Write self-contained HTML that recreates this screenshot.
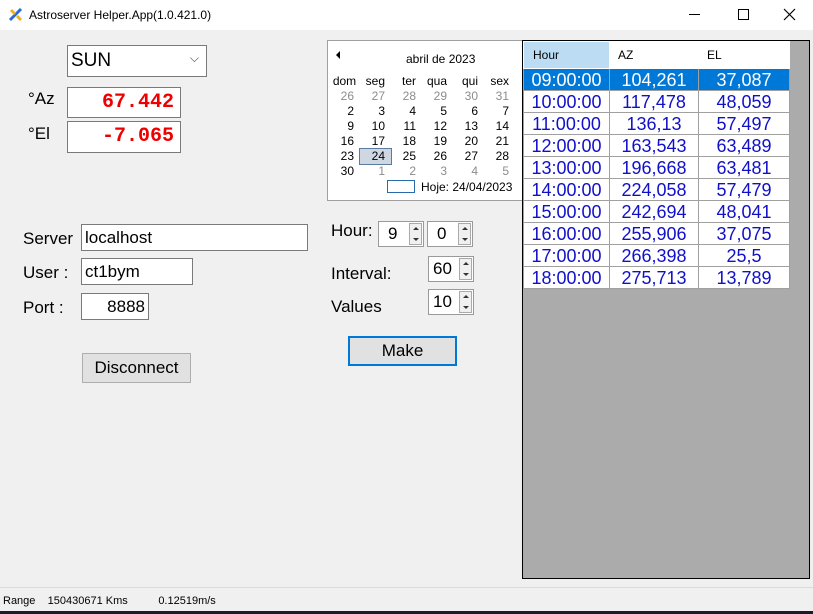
<!DOCTYPE html><html><head><style>
*{margin:0;padding:0;box-sizing:border-box}
body{width:813px;height:614px;background:#f0f0f0;font-family:"Liberation Sans",sans-serif;position:relative;overflow:hidden}
.a{position:absolute}
.tb{background:#fff;height:30px;top:0;left:0;width:813px}
.box{background:#fff;border:1px solid #7a7a7a}
.lbl{font-size:17px;color:#000}
.mono{font-family:"Liberation Mono",monospace;font-weight:bold;color:#e00;font-size:20px;text-align:right;padding-right:6px;line-height:29px}
.cal{font-size:12px;color:#000}
.cal td{width:31px;text-align:right;padding-right:6px;height:15px;line-height:15px}
.g{color:#8c8c8c}
.spin{background:#fff;border:1px solid #9a9a9a;font-size:17px;line-height:24px}
.sb{position:absolute;right:1px;top:1px;width:13px;height:22px;border:1px solid #aaa;background:#f0f0f0}
.sb:before{content:"";position:absolute;left:3px;top:3px;border:3px solid transparent;border-bottom:3px solid #333;border-top:0}
.sb:after{content:"";position:absolute;left:3px;bottom:3px;border:3px solid transparent;border-top:3px solid #333;border-bottom:0}
table.grid{border-collapse:collapse;font-size:18px;color:#1010c8}
table.grid td{height:22px;border:1px solid #a0a0a0;background:#fff;text-align:center;line-height:20px;padding:0}
</style></head><body>
<div class="a tb"></div>
<svg class="a" style="left:8px;top:7px" width="15" height="15"><path d="M2 13L13 2" stroke="#2a6ad8" stroke-width="3"/><path d="M3 3l4 4M9 9l4 4" stroke="#f0b020" stroke-width="3"/></svg>
<div class="a" style="left:29px;top:8px;font-size:12px">Astroserver Helper.App(1.0.421.0)</div>
<div class="a" style="left:689px;top:14px;width:11px;height:1px;background:#000"></div>
<div class="a" style="left:738px;top:9px;width:11px;height:11px;border:1px solid #000"></div>
<svg class="a" style="left:783px;top:8px" width="13" height="13"><path d="M1 1L12 12M12 1L1 12" stroke="#000" stroke-width="1.2"/></svg>

<div class="a box" style="left:67px;top:45px;width:140px;height:32px;font-size:19px;padding:4px 3px">SUN<span style="position:absolute;right:7px;top:5px;font-size:12px;color:#444">⌵</span></div>
<div class="a lbl" style="left:28px;top:89px">°Az</div>
<div class="a box mono" style="left:67px;top:87px;width:114px;height:31px">67.442</div>
<div class="a lbl" style="left:28px;top:124px">°El</div>
<div class="a box mono" style="left:67px;top:121px;width:114px;height:32px">-7.065</div>

<div class="a" style="left:327px;top:40px;width:196px;height:161px;background:#fff;border:1px solid #a0a0a0"></div>
<div class="a" style="left:336px;top:51px;border:4px solid transparent;border-right:4px solid #000;border-left:0"></div>
<div class="a cal" style="left:406px;top:52px">abril de 2023</div>
<table class="a cal" style="left:329px;top:74px;border-collapse:collapse">
<tr><td style="text-align:center;padding:0">dom</td><td>seg</td><td>ter</td><td>qua</td><td>qui</td><td>sex</td></tr>
<tr class="g"><td>26</td><td>27</td><td>28</td><td>29</td><td>30</td><td>31</td></tr>
<tr><td>2</td><td>3</td><td>4</td><td>5</td><td>6</td><td>7</td></tr>
<tr><td>9</td><td>10</td><td>11</td><td>12</td><td>13</td><td>14</td></tr>
<tr><td>16</td><td>17</td><td>18</td><td>19</td><td>20</td><td>21</td></tr>
<tr><td>23</td><td style="background:#cfd8e2;outline:1px solid #5a7aa0">24</td><td>25</td><td>26</td><td>27</td><td>28</td></tr>
<tr class="g"><td style="color:#000">30</td><td>1</td><td>2</td><td>3</td><td>4</td><td>5</td></tr>
</table>
<div class="a" style="left:387px;top:180px;width:28px;height:13px;border:1px solid #2a6aa8"></div>
<div class="a cal" style="left:421px;top:180px">Hoje: 24/04/2023</div>

<div class="a lbl" style="left:23px;top:229px">Server</div>
<div class="a box" style="left:81px;top:224px;width:227px;height:27px;font-size:17px;padding:3px 3px">localhost</div>
<div class="a lbl" style="left:23px;top:263px">User :</div>
<div class="a box" style="left:81px;top:258px;width:112px;height:27px;font-size:17px;padding:3px 3px">ct1bym</div>
<div class="a lbl" style="left:23px;top:298px">Port :</div>
<div class="a box" style="left:81px;top:293px;width:68px;height:27px;font-size:17px;padding:3px 3px;text-align:right">8888</div>
<div class="a" style="left:82px;top:353px;width:109px;height:30px;border:1px solid #adadad;background:#e1e1e1;font-size:17px;text-align:center;line-height:28px">Disconnect</div>

<div class="a lbl" style="left:331px;top:221px">Hour:</div>
<div class="a spin" style="left:378px;top:221px;width:46px;height:26px;padding-left:9px">9<div class="sb"></div></div>
<div class="a spin" style="left:427px;top:221px;width:46px;height:26px;padding-left:9px">0<div class="sb"></div></div>
<div class="a lbl" style="left:331px;top:264px">Interval:</div>
<div class="a spin" style="left:428px;top:256px;width:46px;height:26px;padding-left:4px">60<div class="sb"></div></div>
<div class="a lbl" style="left:331px;top:297px">Values</div>
<div class="a spin" style="left:428px;top:289px;width:46px;height:26px;padding-left:4px">10<div class="sb"></div></div>
<div class="a" style="left:348px;top:336px;width:109px;height:30px;border:2px solid #0078d7;background:#e1e1e1;font-size:17px;text-align:center;line-height:26px">Make</div>

<div class="a" style="left:522px;top:40px;width:288px;height:539px;background:#ababab;border:1px solid #000"></div>
<table class="a grid" style="left:523px;top:41px">
<tr style="font-size:12px;color:#000"><td style="width:86px;height:27px;background:#bcdcf4;text-align:left;padding-left:9px;border-color:#fff">Hour</td><td style="width:89px;text-align:left;padding-left:8px;border-color:#fff">AZ</td><td style="width:91px;text-align:left;padding-left:8px;border-color:#fff">EL</td></tr>
<tr style="color:#fff"><td style="background:#0078d7">09:00:00</td><td style="background:#0078d7">104,261</td><td style="background:#0078d7">37,087</td></tr>
<tr><td>10:00:00</td><td>117,478</td><td>48,059</td></tr>
<tr><td>11:00:00</td><td>136,13</td><td>57,497</td></tr>
<tr><td>12:00:00</td><td>163,543</td><td>63,489</td></tr>
<tr><td>13:00:00</td><td>196,668</td><td>63,481</td></tr>
<tr><td>14:00:00</td><td>224,058</td><td>57,479</td></tr>
<tr><td>15:00:00</td><td>242,694</td><td>48,041</td></tr>
<tr><td>16:00:00</td><td>255,906</td><td>37,075</td></tr>
<tr><td>17:00:00</td><td>266,398</td><td>25,5</td></tr>
<tr><td>18:00:00</td><td>275,713</td><td>13,789</td></tr>
</table>

<div class="a" style="left:0;top:587px;width:813px;height:1px;background:#dadada"></div>
<div class="a" style="left:3px;top:595px;font-size:11px">Range&nbsp;&nbsp;&nbsp; 150430671 Kms&nbsp;&nbsp;&nbsp;&nbsp;&nbsp;&nbsp;&nbsp;&nbsp;&nbsp; 0.12519m/s</div>
<div class="a" style="left:0;top:611px;width:813px;height:3px;background:#1a1a2a"></div>
</body></html>
